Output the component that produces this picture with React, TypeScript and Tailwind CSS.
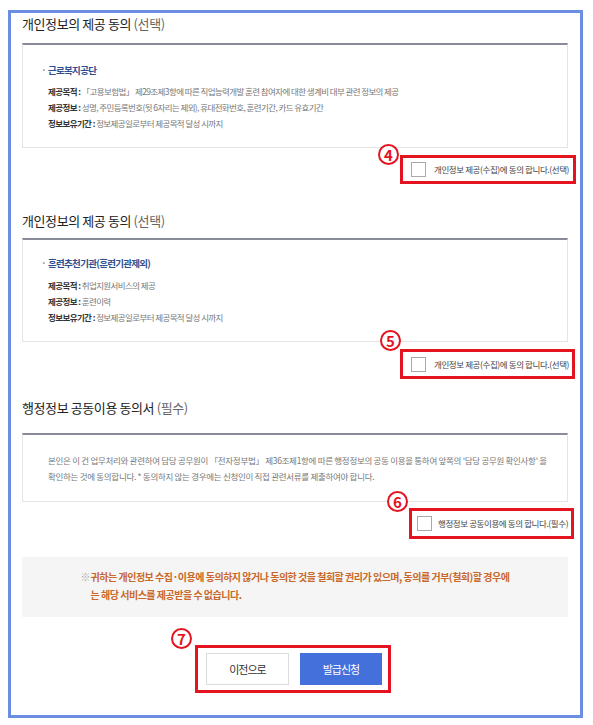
import React from "react";

const font = { fontFamily: '"Noto Sans CJK KR", "Noto Sans", sans-serif' };

const Circled = ({ n, className }: { n: string; className: string }) => (
  <span
    className={`absolute flex h-[21px] w-[21px] items-center justify-center rounded-full border-2 border-[#e3141f] bg-white text-[15px] font-bold leading-none text-[#e3141f] ${className}`}
  >
    {n}
  </span>
);

const Title = ({ text, tag, className }: { text: string; tag: string; className: string }) => (
  <h2 className={`text-[13px] leading-[18px] tracking-[-0.4px] text-[#222] ${className}`}>
    {text} <span className="text-[#666]">{tag}</span>
  </h2>
);

const Detail = ({ label, value }: { label: string; value: string }) => (
  <p className="whitespace-nowrap text-[8.5px] leading-[16px] tracking-[-0.6px] text-[#777]">
    <b className="font-bold text-[#333]">{label} :</b> {value}
  </p>
);

const Checkbox = () => <span className="block h-[15px] w-[15px] shrink-0 border border-[#a9a9a9] bg-white" />;

export default function App() {
  return (
    <div className="min-h-[725px] bg-white pl-[8px] pt-[10px]" style={font}>
      <div className="h-[708px] w-[575px] border-[3px] border-[#6b8ee3] pl-[11px] pr-[12px]">
        {/* section 1 */}
        <Title text="개인정보의 제공 동의" tag="(선택)" className="mt-[2px]" />
        <div className="mt-[10px] h-[105px] border border-t-2 border-[#e4e4e4] border-t-[#8a8b99] pl-[25px] pt-[18px]">
          <p className="relative text-[9.5px] font-bold leading-[14px] tracking-[-0.7px] text-[#2f4f8f]">
            <span className="absolute -left-[7px] text-[#888]">·</span>
            근로복지공단
          </p>
          <div className="mt-[6px]">
            <Detail label="제공목적" value="「고용보험법」 제29조제3항에 따른 직업능력개발 훈련 참여자에 대한 생계비 대부 관련 정보의 제공" />
            <Detail label="제공정보" value="성명, 주민등록번호(뒷 6자리는 제외), 휴대전화번호, 훈련기간, 카드 유효기간" />
            <Detail label="정보보유기간" value="정보제공일로부터 제공목적 달성 시까지" />
          </div>
        </div>
        <div className="mt-[7px] flex justify-end">
          <div className="relative -mr-[8px] flex h-[29px] w-[176px] items-center gap-[8px] border-[3px] border-[#e3141f] pl-[8px]">
            <Circled n="4" className="-left-[25px] -top-[14px]" />
            <Checkbox />
            <span className="whitespace-nowrap text-[8.5px] tracking-[-0.4px] text-[#444]">개인정보 제공(수집)에 동의 합니다.(선택)</span>
          </div>
        </div>

        {/* section 2 */}
        <Title text="개인정보의 제공 동의" tag="(선택)" className="mt-[28px]" />
        <div className="mt-[8px] h-[104px] border border-t-2 border-[#e4e4e4] border-t-[#8a8b99] pl-[25px] pt-[16px]">
          <p className="relative text-[9.5px] font-bold leading-[14px] tracking-[-0.7px] text-[#2f4f8f]">
            <span className="absolute -left-[7px] text-[#888]">·</span>
            훈련추천기관(훈련기관제외)
          </p>
          <div className="mt-[7px]">
            <Detail label="제공목적" value="취업지원서비스의 제공" />
            <Detail label="제공정보" value="훈련이력" />
            <Detail label="정보보유기간" value="정보제공일로부터 제공목적 달성 시까지" />
          </div>
        </div>
        <div className="mt-[7px] flex justify-end">
          <div className="relative -mr-[7px] flex h-[30px] w-[175px] items-center gap-[8px] border-[3px] border-[#e3141f] pl-[8px]">
            <Circled n="5" className="-left-[23px] -top-[22px]" />
            <Checkbox />
            <span className="whitespace-nowrap text-[8.5px] tracking-[-0.4px] text-[#444]">개인정보 제공(수집)에 동의 합니다.(선택)</span>
          </div>
        </div>

        {/* section 3 */}
        <Title text="행정정보 공동이용 동의서" tag="(필수)" className="mt-[20px]" />
        <div className="mt-[16px] h-[69px] border border-t-2 border-[#e4e4e4] border-t-[#8a8b99] pl-[25px] pt-[17px]">
          <p className="whitespace-nowrap text-[8.5px] leading-[16px] tracking-[-0.3px] text-[#777]">
            본인은 이 건 업무처리와 관련하여 담당 공무원이 「전자정부법」 제36조제1항에 따른 행정정보의 공동 이용을 통하여 앞쪽의 '담당 공무원 확인사항' 을
            <br />
            확인하는 것에 동의합니다. * 동의하지 않는 경우에는 신청인이 직접 관련서류를 제출하여야 합니다.
          </p>
        </div>
        <div className="mt-[6px] flex justify-end">
          <div className="relative -mr-[6px] flex h-[31px] w-[165px] items-center gap-[6px] border-[3px] border-[#e3141f] pl-[5px]">
            <Circled n="6" className="-left-[25px] -top-[20px]" />
            <Checkbox />
            <span className="whitespace-nowrap text-[8.5px] tracking-[-0.4px] text-[#444]">행정정보 공동이용에 동의 합니다.(필수)</span>
          </div>
        </div>

        {/* notice */}
        <div className="mt-[18px] flex h-[60px] justify-center bg-[#f5f5f5] pt-[11px]">
          <div className="flex text-[10px] font-bold leading-[18px] tracking-[-0.5px] text-[#c8682a]">
            <span className="w-[10px] shrink-0 font-normal text-[#aaa]">※</span>
            <p>
              귀하는 개인정보 수집·이용에 동의하지 않거나 동의한 것을 철회할 권리가 있으며, 동의를 거부(철회)할 경우에
              <br />는 해당 서비스를 제공받을 수 없습니다.
            </p>
          </div>
        </div>

        {/* buttons */}
        <div className="mt-[28px] flex justify-center">
          <div className="relative -ml-[4px] flex h-[48px] w-[196px] items-start gap-[11px] border-[3px] border-[#e3141f] pl-[8px] pt-[5px]">
            <Circled n="7" className="-left-[27px] -top-[20px]" />
            <button className="h-[32px] w-[83px] border border-[#dcdcdc] bg-white text-[11px] tracking-[-1px] text-[#333]">이전으로</button>
            <button className="h-[32px] w-[82px] bg-[#4470db] text-[11px] tracking-[-1px] text-white">발급신청</button>
          </div>
        </div>
      </div>
    </div>
  );
}
